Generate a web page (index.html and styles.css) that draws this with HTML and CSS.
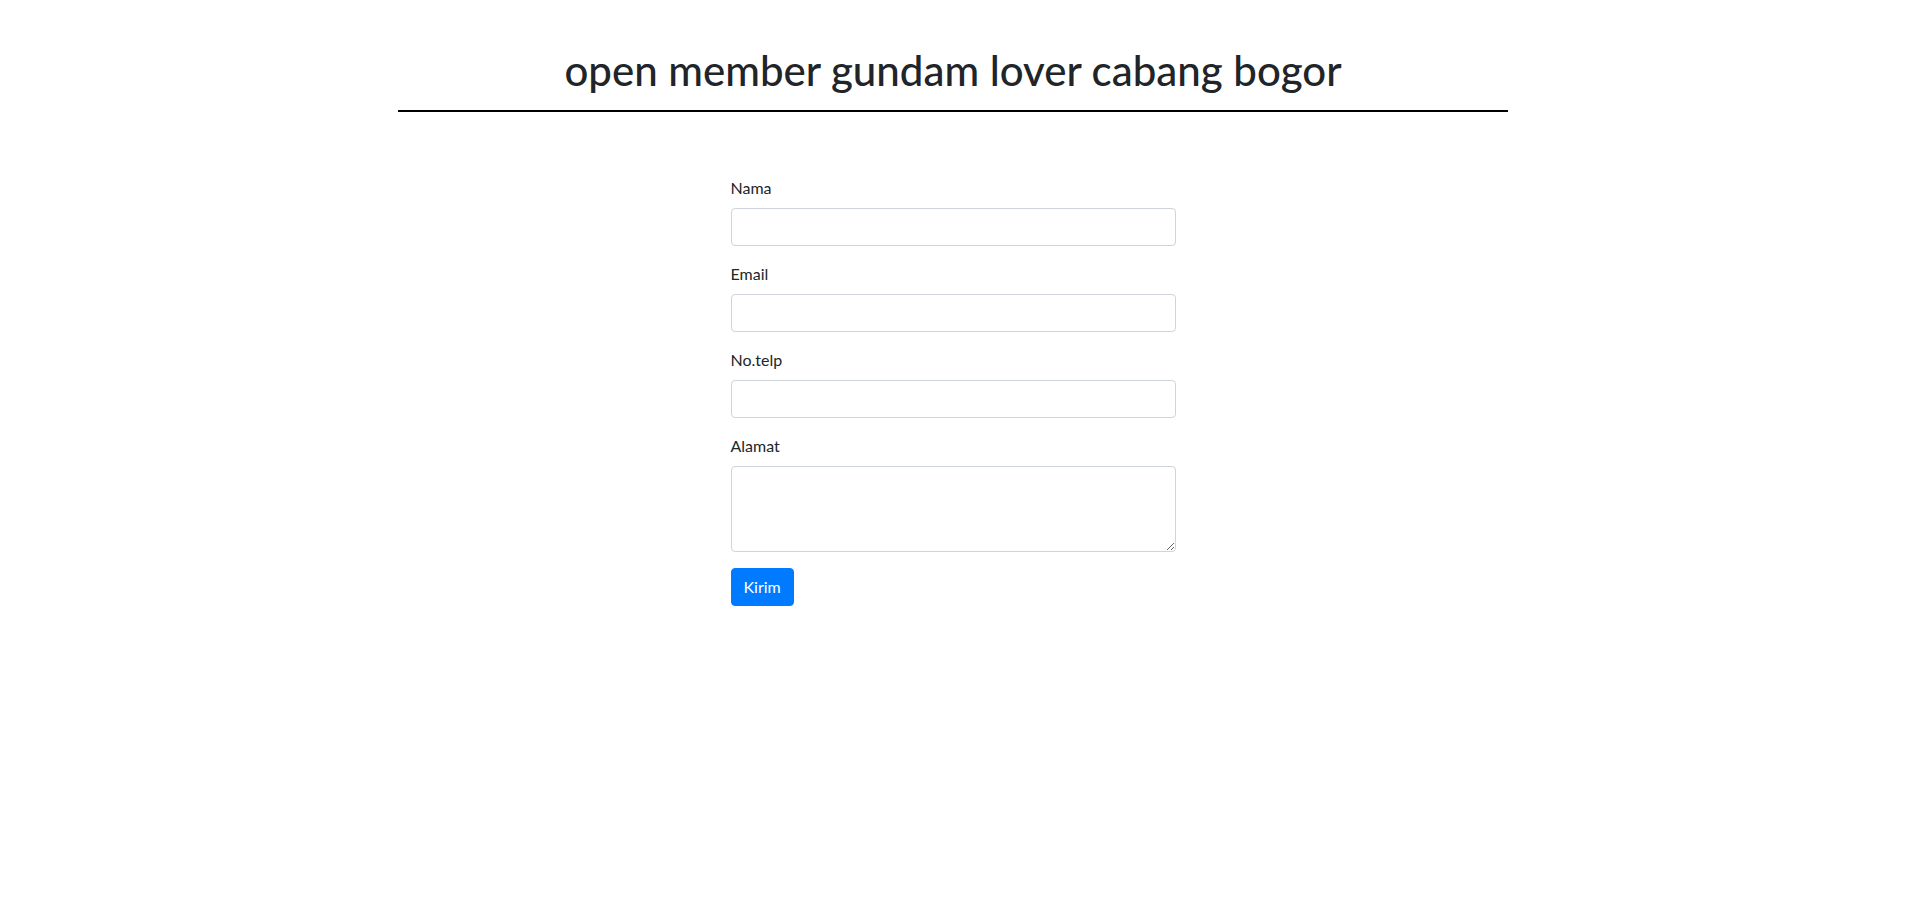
FILE: index.html
```html
<!DOCTYPE html>
<html lang="id">
<head>
<meta charset="utf-8">
<title>open member gundam lover cabang bogor</title>
<link rel="stylesheet" href="styles.css">
</head>
<body>
<div class="container">
  <h1 class="title">open member gundam lover cabang bogor</h1>
  <hr class="rule">
  <form class="form">
    <div class="group">
      <label class="label" for="nama">Nama</label>
      <input class="control" id="nama" type="text">
    </div>
    <div class="group">
      <label class="label" for="email">Email</label>
      <input class="control" id="email" type="email">
    </div>
    <div class="group">
      <label class="label" for="telp">No.telp</label>
      <input class="control" id="telp" type="text">
    </div>
    <div class="group">
      <label class="label" for="alamat">Alamat</label>
      <textarea class="control area" id="alamat" rows="3"></textarea>
    </div>
    <button class="btn" type="button">Kirim</button>
  </form>
</div>
</body>
</html>
```
FILE: styles.css
```css
* { box-sizing: border-box; }
body {
  margin: 0;
  padding-right: 7px;
  background: #fff;
  color: #212529;
  font-family: Lato, "Open Sans", sans-serif;
  font-size: 16px;
  line-height: 1.5;
}
.container {
  max-width: 1110px;
  margin: 0 auto;
}
.title {
  margin: 46px 0 16px;
  text-align: center;
  font-size: 42px;
  font-weight: 500;
  line-height: 48px;
  color: #212529;
}
.rule {
  margin: 0 0 64px;
  border: 0;
  border-top: 2px solid #000;
}
.form {
  width: 445px;
  margin: 0 auto;
}
.group { margin-bottom: 16px; }
.label {
  display: block;
  margin-bottom: 8px;
  line-height: 24px;
}
.control {
  display: block;
  width: 100%;
  height: 38px;
  padding: 6px 12px;
  border: 1px solid #ced4da;
  border-radius: 4px;
  background: #fff;
  font: inherit;
  color: #495057;
}
.area { height: 86px; resize: vertical; }
.btn {
  display: inline-block;
  padding: 6px 12px;
  border: 1px solid #007bff;
  border-radius: 4px;
  background: #007bff;
  color: #fff;
  font: inherit;
  line-height: 24px;
}
```
